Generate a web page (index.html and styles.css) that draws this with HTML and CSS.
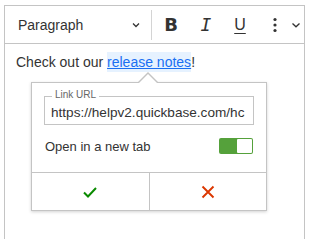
FILE: index.html
```html
<!DOCTYPE html>
<html>
<head>
<meta charset="utf-8">
<link rel="stylesheet" href="styles.css">
</head>
<body>
<div class="editor">
  <div class="toolbar">
    <div class="heading">
      <span class="heading-label">Paragraph</span>
      <svg class="chev" width="10" height="10" viewBox="0 0 10 10"><path d="M2 3.5 L5 6.5 L8 3.5" fill="none" stroke="#333" stroke-width="1.3"/></svg>
    </div>
    <span class="sep"></span>
    <span class="tb bold">B</span>
    <span class="tb ital">I</span>
    <span class="tb under">U</span>
    <span class="tb dots">
      <svg width="4" height="16" viewBox="0 0 4 16"><circle cx="2" cy="2.5" r="1.6" fill="#333"/><circle cx="2" cy="8" r="1.6" fill="#333"/><circle cx="2" cy="13.5" r="1.6" fill="#333"/></svg>
    </span>
    <span class="tb more">
      <svg width="10" height="10" viewBox="0 0 10 10"><path d="M1.5 3.5 L5 6.8 L8.5 3.5" fill="none" stroke="#333" stroke-width="1.3"/></svg>
    </span>
  </div>
  <div class="content">
    <p>Check out our <a class="link" href="#">release notes</a>!</p>
  </div>
</div>
<div class="balloon">
  <div class="form">
    <div class="field">
      <span class="field-label">Link URL</span>
      <div class="field-input">https://helpv2.quickbase.com/hc</div>
    </div>
    <div class="switch-row">
      <span>Open in a new tab</span>
      <span class="switch"><span class="knob"></span></span>
    </div>
  </div>
  <div class="actions">
    <button class="act">
      <svg width="20" height="20" viewBox="0 0 20 20"><path d="M4 10.5 L8 14.5 L16 6" fill="none" stroke="#0a8a00" stroke-width="2"/></svg>
    </button>
    <button class="act act-cancel">
      <svg width="20" height="20" viewBox="0 0 20 20"><path d="M4.5 4.5 L15.5 15.5 M15.5 4.5 L4.5 15.5" fill="none" stroke="#db3700" stroke-width="1.9"/></svg>
    </button>
  </div>
</div>
</body>
</html>
```

FILE: styles.css
```css
* { box-sizing: border-box; }
html, body { margin: 0; padding: 0; background: #fff; overflow: hidden; }
body {
  font-family: "Liberation Sans", Arial, sans-serif;
  color: #333;
  width: 309px;
  height: 239px;
  position: relative;
}
.editor {
  margin: 5px 4px 0 4px;
  border: 1px solid #c4c4c4;
  height: 260px;
}
.toolbar {
  height: 38px;
  border-bottom: 1px solid #c4c4c4;
  display: flex;
  align-items: center;
}
.heading {
  width: 146px;
  display: flex;
  align-items: center;
  padding: 0 10px 0 13px;
  justify-content: space-between;
  font-size: 14px;
}
.sep {
  width: 1px;
  height: 30px;
  background: #d4d4d4;
}
.tb {
  display: flex;
  align-items: center;
  justify-content: center;
  height: 30px;
}
.bold {
  font-family: "DejaVu Sans", sans-serif;
  font-weight: bold;
  font-size: 18px;
  width: 24px;
  margin-left: 7px;
}
.ital {
  font-family: "DejaVu Sans Mono", monospace;
  font-style: italic;
  font-size: 18px;
  width: 24px;
  margin-left: 11px;
}
.under {
  font-family: "Liberation Sans", sans-serif;
  font-size: 16px;
  text-decoration: underline;
  text-decoration-thickness: 1px;
  text-underline-offset: 3px;
  width: 24px;
  margin-left: 10px;
}
.dots { width: 14px; margin-left: 16px; }
.more { width: 14px; margin-left: 7px; }
.content { padding: 0 11px; font-size: 14px; }
.content p { margin: 6px 0 0; line-height: 24px; }
.link {
  color: #1a6ff2;
  text-decoration: underline;
  background: #e6f2ff;
  padding: 2px 0;
}
.balloon {
  position: absolute;
  left: 31px;
  top: 82px;
  width: 236px;
  height: 129px;
  background: #fff;
  border: 1px solid #c4c4c4;
  box-shadow: 0 1px 3px rgba(0,0,0,0.18);
  display: flex;
  flex-direction: column;
}
.balloon::before, .balloon::after {
  content: "";
  position: absolute;
  left: 106px;
  border-style: solid;
  border-color: transparent;
}
.balloon::before {
  top: -11px;
  border-width: 0 10px 10px 10px;
  border-bottom-color: #c4c4c4;
}
.balloon::after {
  top: -9.5px;
  left: 107px;
  border-width: 0 9px 9.5px 9px;
  border-bottom-color: #fff;
}
.form { padding: 13px 12px 0 12px; flex: 1; }
.field {
  position: relative;
  border: 1px solid #c4c4c4;
  height: 29px;
  display: flex;
  align-items: center;
  padding: 3px 4px 0 6px;
}
.field-input {
  font-size: 13.6px;
  white-space: nowrap;
  color: #333;
}
.field-label {
  position: absolute;
  left: 7px;
  top: -8px;
  font-size: 10px;
  color: #666;
  background: #fff;
  padding: 0 3px;
  line-height: 12px;
}
.switch-row {
  margin-top: 13px;
  display: flex;
  align-items: center;
  justify-content: space-between;
  font-size: 13px;
  padding-left: 1px;
  padding-right: 1px;
  height: 16px;
}
.switch {
  width: 34px;
  height: 16px;
  border-radius: 2px;
  background: #55a13b;
  position: relative;
  display: block;
}
.knob {
  position: absolute;
  right: 1px;
  top: 1px;
  width: 15px;
  height: 14px;
  background: #fff;
  border-radius: 1px;
}
.actions {
  height: 38px;
  border-top: 1px solid #c4c4c4;
  display: flex;
}
.act {
  flex: 1;
  border: 0;
  background: #fff;
  display: flex;
  align-items: center;
  justify-content: center;
  padding: 0;
}
.act-cancel { border-left: 1px solid #c4c4c4; }
```
